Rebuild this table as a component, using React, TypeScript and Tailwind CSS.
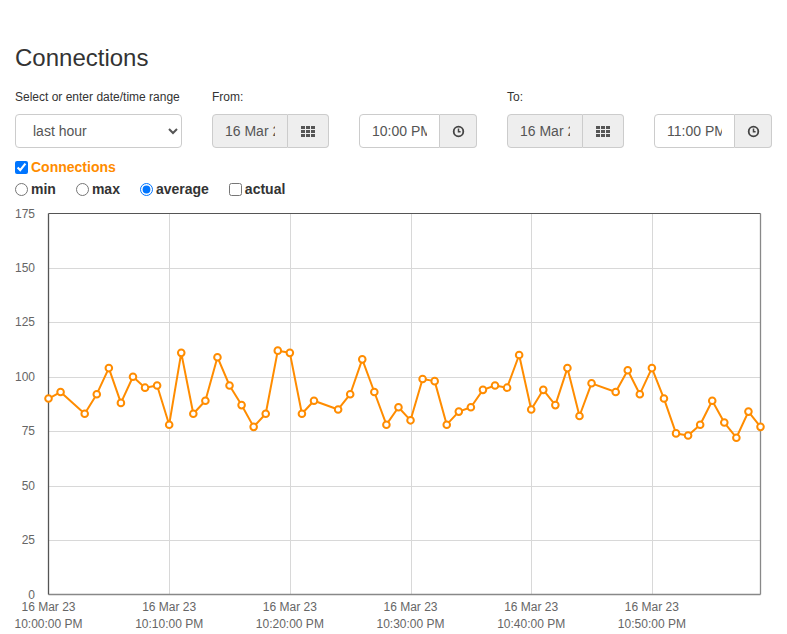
import React from "react";

const data: [number, number][] = [
  [0, 90], [1, 93], [3, 83], [4, 92], [5, 104], [6, 88], [7, 100], [8, 95], [9, 96], [10, 78],
  [11, 111], [12, 83], [13, 89], [14, 109], [15, 96], [16, 87], [17, 77], [18, 83], [19, 112], [20, 111],
  [21, 83], [22, 89], [24, 85], [25, 92], [26, 108], [27, 93], [28, 78], [29, 86], [30, 80], [31, 99],
  [32, 98], [33, 78], [34, 84], [35, 86], [36, 94], [37, 96], [38, 95], [39, 110], [40, 85], [41, 94],
  [42, 87], [43, 104], [44, 82], [45, 97], [47, 93], [48, 103], [49, 92], [50, 104], [51, 90], [52, 74],
  [53, 73], [54, 78], [55, 89], [56, 79], [57, 72], [58, 84], [59, 77],
];

const X0 = 48.5;
const X1 = 760.5;
const Y0 = 594.5;
const YT = 213.5;
const px = (m: number) => X0 + (m * (X1 - X0)) / 59;
const py = (v: number) => Y0 - (v * (Y0 - YT)) / 175;

function GridIcon() {
  return (
    <svg width="14" height="11" viewBox="0 0 14 11" fill="#555">
      {[0, 1, 2].map((r) =>
        [0, 1, 2].map((c) => (
          <rect key={`${r}-${c}`} x={c * 5} y={r * 4} width="4" height="3" />
        ))
      )}
    </svg>
  );
}

function ClockIcon() {
  return (
    <svg width="13" height="13" viewBox="0 0 13 13" fill="none" stroke="#444">
      <circle cx="6.5" cy="6.5" r="4.8" strokeWidth="1.8" />
      <path d="M6.5 3.6V6.8H8.6" strokeWidth="1.5" />
    </svg>
  );
}

function DateGroup() {
  return (
    <div className="flex h-[34px]">
      <input
        readOnly
        value="16 Mar 2023"
        className="w-[76px] h-[34px] border border-[#ccc] rounded-l-[4px] bg-[#eee] px-3 text-[14px] text-[#555] outline-none"
      />
      <div className="w-[41px] h-[34px] border border-l-0 border-[#ccc] rounded-r-[4px] bg-[#eee] flex items-center justify-center">
        <GridIcon />
      </div>
    </div>
  );
}

function TimeGroup({ value }: { value: string }) {
  return (
    <div className="flex h-[34px]">
      <input
        readOnly
        value={value}
        className="w-[81px] h-[34px] border border-[#ccc] rounded-l-[4px] bg-white px-3 text-[14px] text-[#555] outline-none"
      />
      <div className="w-[37px] h-[34px] border border-l-0 border-[#ccc] rounded-r-[4px] bg-[#eee] flex items-center justify-center">
        <ClockIcon />
      </div>
    </div>
  );
}

export default function App() {
  const yTicks = [0, 25, 50, 75, 100, 125, 150, 175];
  const xTicks = [
    { m: 0, t: "10:00:00 PM" },
    { m: 10, t: "10:10:00 PM" },
    { m: 20, t: "10:20:00 PM" },
    { m: 30, t: "10:30:00 PM" },
    { m: 40, t: "10:40:00 PM" },
    { m: 50, t: "10:50:00 PM" },
  ];
  const linePts = data.map(([m, v]) => `${px(m)},${py(v)}`).join(" ");

  return (
    <div
      className="w-[787px] h-[634px] overflow-hidden bg-white text-[#333]"
      style={{ fontFamily: '"Liberation Sans", Arial, sans-serif' }}
    >
      <div className="px-[15px]">
        <h3 className="text-[24px] leading-[26px] mt-[45px] font-normal text-[#333]">Connections</h3>

        <div className="flex gap-[30px] mt-[19px]">
          <div className="flex flex-col w-[167px]">
            <label className="text-[12px] leading-[14px] h-[14px] mb-[10px]">Select or enter date/time range</label>
            <select
              defaultValue="last hour"
              className="w-[167px] h-[34px] border border-[#ccc] rounded-[4px] bg-white pl-[13px] pr-2 text-[14px] text-[#555] outline-none"
            >
              <option>last hour</option>
              <option>last day</option>
              <option>last week</option>
            </select>
          </div>
          <div className="flex flex-col w-[265px]">
            <label className="text-[12px] leading-[14px] h-[14px] mb-[10px]">From:</label>
            <div className="flex gap-[30px]">
              <DateGroup />
              <TimeGroup value="10:00 PM" />
            </div>
          </div>
          <div className="flex flex-col w-[265px]">
            <label className="text-[12px] leading-[14px] h-[14px] mb-[10px]">To:</label>
            <div className="flex gap-[30px]">
              <DateGroup />
              <TimeGroup value="11:00 PM" />
            </div>
          </div>
        </div>

        <div className="flex items-center h-[20px] mt-[9px] text-[14px] font-bold text-[#ff8c00]">
          <input type="checkbox" defaultChecked className="w-[13px] h-[13px] m-0 mr-[3px]" />
          <span>Connections</span>
        </div>

        <div className="flex items-center h-[20px] mt-[2px] text-[14px] font-bold text-[#333] gap-[20px]">
          <label className="flex items-center">
            <input type="radio" name="agg" className="w-[13px] h-[13px] m-0 mr-[3px]" />
            <span>min</span>
          </label>
          <label className="flex items-center">
            <input type="radio" name="agg" className="w-[13px] h-[13px] m-0 mr-[3px]" />
            <span>max</span>
          </label>
          <label className="flex items-center">
            <input type="radio" name="agg" defaultChecked className="w-[13px] h-[13px] m-0 mr-[3px]" />
            <span>average</span>
          </label>
          <label className="flex items-center">
            <input type="checkbox" className="w-[13px] h-[13px] m-0 mr-[3px]" />
            <span>actual</span>
          </label>
        </div>
      </div>

      <svg
        className="block mt-[5px]"
        width="787"
        height="430"
        viewBox="0 204 787 430"
        style={{ fontFamily: '"Liberation Sans", Arial, sans-serif' }}
      >
        {yTicks.slice(1, 7).map((v) => (
          <line key={v} x1={X0} x2={X1} y1={Math.round(py(v)) + 0.5} y2={Math.round(py(v)) + 0.5} stroke="#d8d8d8" strokeWidth="1" />
        ))}
        {xTicks.slice(1).map(({ m }) => (
          <line key={m} x1={Math.round(px(m)) + 0.5} x2={Math.round(px(m)) + 0.5} y1={YT} y2={Y0} stroke="#d8d8d8" strokeWidth="1" />
        ))}
        <line x1={X0} x2={X1} y1={YT} y2={YT} stroke="#555" strokeWidth="1" />
        <line x1={X1} x2={X1} y1={YT} y2={Y0} stroke="#888" strokeWidth="1.3" />
        <line x1={X0} x2={X1} y1={Y0} y2={Y0} stroke="#888" strokeWidth="1.3" />
        <line x1={X0} x2={X0} y1={YT} y2={Y0} stroke="#555" strokeWidth="1.3" />

        {yTicks.map((v) => (
          <text key={v} x="35" y={py(v)} textAnchor="end" dominantBaseline="central" fontSize="12" fill="#666">
            {v}
          </text>
        ))}
        {xTicks.map(({ m, t }) => (
          <g key={m}>
            <text x={px(m)} y="607" textAnchor="middle" dominantBaseline="central" fontSize="12" fill="#666">
              16 Mar 23
            </text>
            <text x={px(m)} y="624" textAnchor="middle" dominantBaseline="central" fontSize="12" fill="#666">
              {t}
            </text>
          </g>
        ))}

        <polyline points={linePts} fill="none" stroke="#ff8c00" strokeWidth="2" strokeLinejoin="round" />
        {data.map(([m, v]) => (
          <circle key={m} cx={px(m)} cy={py(v)} r="3.3" fill="#fff" stroke="#ff8c00" strokeWidth="2" />
        ))}
      </svg>
    </div>
  );
}
